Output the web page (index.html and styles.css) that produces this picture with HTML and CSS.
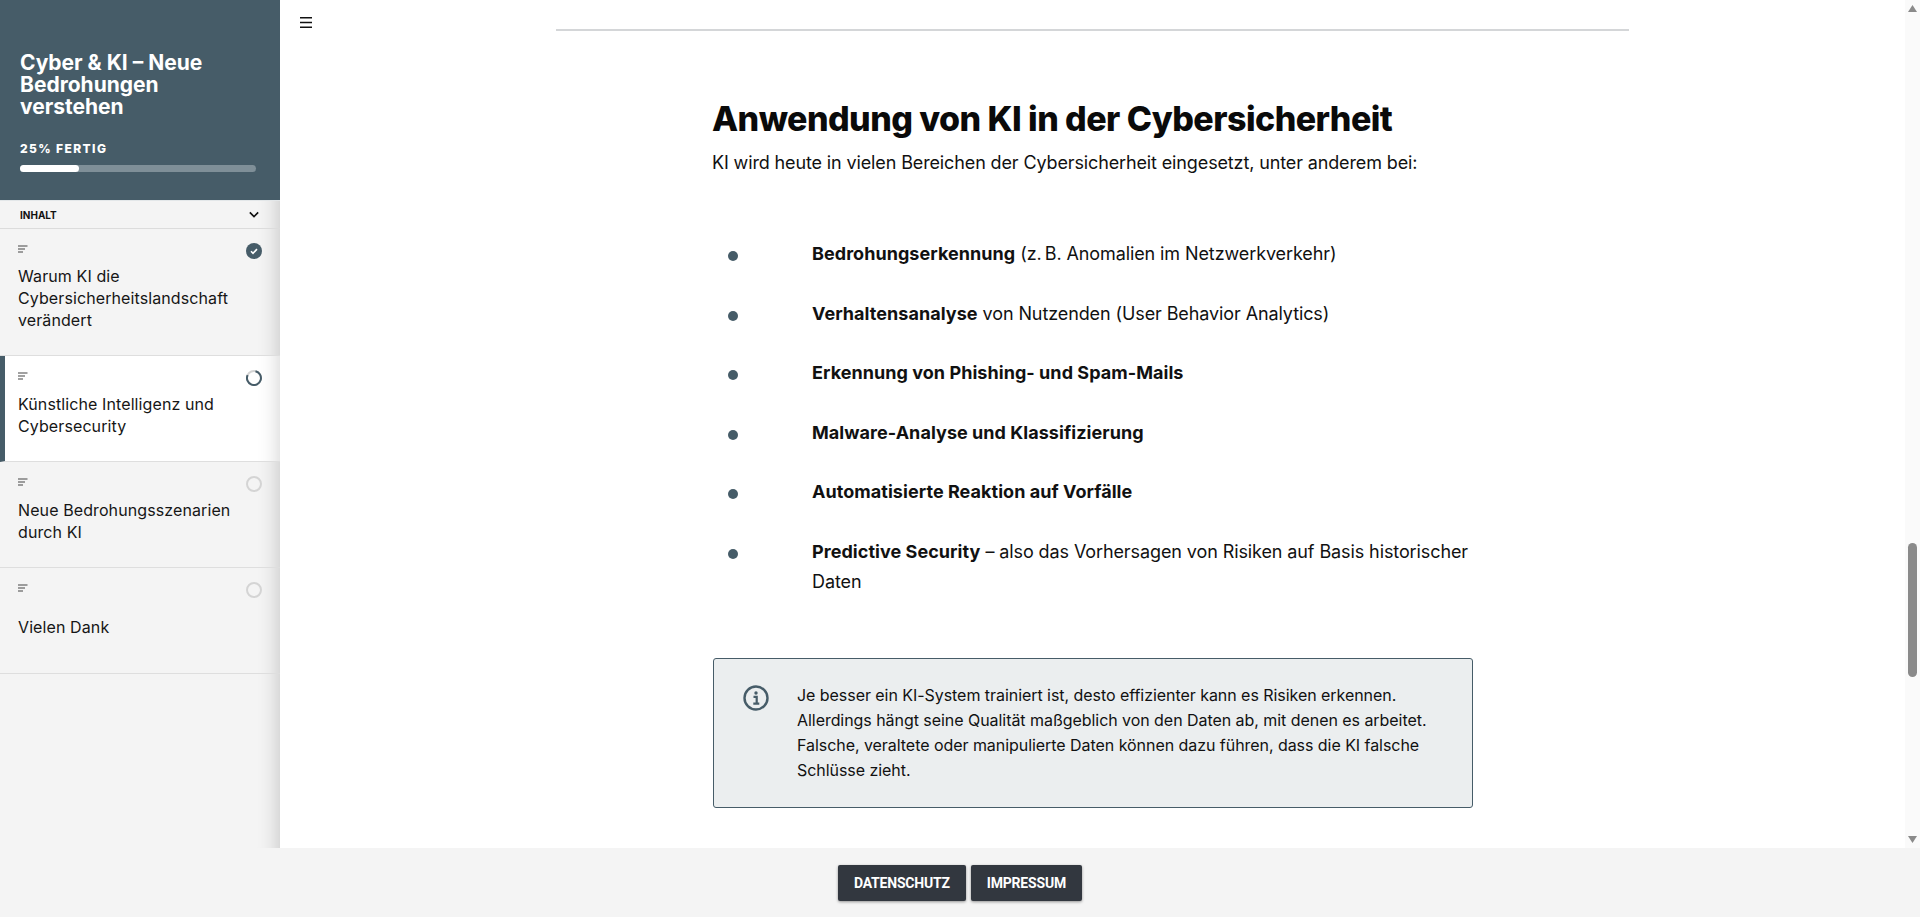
FILE: index.html
```html
<!DOCTYPE html>
<html lang="de">
<head>
  <meta charset="utf-8">
  <title>Cyber &amp; KI – Neue Bedrohungen verstehen</title>
  <link rel="stylesheet" href="styles.css">
</head>
<body>
  <div class="page">
    <div class="workspace">
      <aside class="sidebar">
        <header class="course-head">
          <h1 class="course-title">Cyber &amp; KI – Neue Bedrohungen verstehen</h1>
          <div class="progress-label">25% FERTIG</div>
          <div class="progress-track"><div class="progress-fill"></div></div>
        </header>
        <div class="toc-head">
          <span>INHALT</span>
          <svg class="chevron" viewBox="0 0 12 8" width="10" height="7"><path d="M1 1.500l5 5 5-5" fill="none" stroke="#111" stroke-width="2"/></svg>
        </div>
        <nav class="toc">
          <a class="lesson lesson-three">
            <div class="lesson-top">
              <svg class="lines" viewBox="0 0 10 8" width="10" height="8"><path d="M0 1h9.500M0 4h7M0 7h5" stroke="#444" stroke-width="1.200"/></svg>
              <svg class="status" viewBox="0 0 16 16" width="16" height="16"><circle cx="8" cy="8" r="8" fill="#465c68"/><path d="M5 8.300l2 2 4-4.200" fill="none" stroke="#fff" stroke-width="1.600"/></svg>
            </div>
            <div class="lesson-name">Warum KI die Cybersicherheitslandschaft verändert</div>
          </a>
          <a class="lesson lesson-active">
            <div class="lesson-top">
              <svg class="lines" viewBox="0 0 10 8" width="10" height="8"><path d="M0 1h9.500M0 4h7M0 7h5" stroke="#444" stroke-width="1.200"/></svg>
              <svg class="status" viewBox="0 0 16 16" width="16" height="16"><circle cx="8" cy="8" r="7" fill="none" stroke="#d4d4d4" stroke-width="2"/><path d="M9.500 1.200A7 7 0 1 1 1.600 5.100" fill="none" stroke="#465c68" stroke-width="2"/></svg>
            </div>
            <div class="lesson-name">Künstliche Intelligenz und Cybersecurity</div>
          </a>
          <a class="lesson">
            <div class="lesson-top">
              <svg class="lines" viewBox="0 0 10 8" width="10" height="8"><path d="M0 1h9.500M0 4h7M0 7h5" stroke="#444" stroke-width="1.200"/></svg>
              <svg class="status" viewBox="0 0 16 16" width="16" height="16"><circle cx="8" cy="8" r="7" fill="none" stroke="#d4d4d4" stroke-width="2"/></svg>
            </div>
            <div class="lesson-name">Neue Bedrohungsszenarien durch KI</div>
          </a>
          <a class="lesson lesson-last">
            <div class="lesson-top">
              <svg class="lines" viewBox="0 0 10 8" width="10" height="8"><path d="M0 1h9.500M0 4h7M0 7h5" stroke="#444" stroke-width="1.200"/></svg>
              <svg class="status" viewBox="0 0 16 16" width="16" height="16"><circle cx="8" cy="8" r="7" fill="none" stroke="#d4d4d4" stroke-width="2"/></svg>
            </div>
            <div class="lesson-name">Vielen Dank</div>
          </a>
        </nav>
      </aside>

      <main class="content">
        <button class="menu-toggle" type="button" aria-label="Menü">
          <svg viewBox="0 0 12 11" width="12" height="11"><path d="M0 .750h12M0 5.500h12M0 10.250h12" stroke="#111" stroke-width="1.500"/></svg>
        </button>
        <hr class="divider">
        <article class="block">
          <h2 class="block-title">Anwendung von KI in der Cybersicherheit</h2>
          <p class="block-intro">KI wird heute in vielen Bereichen der Cybersicherheit eingesetzt, unter anderem bei:</p>
          <ul class="points">
            <li><strong>Bedrohungserkennung</strong> (z.&#8201;B. Anomalien im Netzwerkverkehr)</li>
            <li><strong>Verhaltensanalyse</strong> von Nutzenden (User Behavior Analytics)</li>
            <li><strong>Erkennung von Phishing- und Spam-Mails</strong></li>
            <li><strong>Malware-Analyse und Klassifizierung</strong></li>
            <li><strong>Automatisierte Reaktion auf Vorfälle</strong></li>
            <li><strong>Predictive Security</strong> – also das Vorhersagen von Risiken auf Basis historischer Daten</li>
          </ul>
          <div class="note">
            <svg class="note-icon" viewBox="0 0 26 26" width="26" height="26">
              <circle cx="13" cy="13" r="11.500" fill="none" stroke="#465c68" stroke-width="2.400"/>
              <circle cx="13" cy="8" r="1.700" fill="#465c68"/>
              <path d="M10.500 11.800h3.200v6.400M10.300 18.600h6" fill="none" stroke="#465c68" stroke-width="2.200"/>
            </svg>
            <p class="note-text">Je besser ein KI-System trainiert ist, desto effizienter kann es Risiken erkennen. Allerdings hängt seine Qualität maßgeblich von den Daten ab, mit denen es arbeitet. Falsche, veraltete oder manipulierte Daten können dazu führen, dass die KI falsche Schlüsse zieht.</p>
          </div>
        </article>
      </main>

      <div class="scrollbar">
        <svg viewBox="0 0 9 7" width="9" height="7"><path d="M4.500 0L9 7H0z" fill="#8a8a8a"/></svg>
        <div class="scroll-thumb"></div>
        <svg viewBox="0 0 9 7" width="9" height="7"><path d="M4.500 7L0 0h9z" fill="#8a8a8a"/></svg>
      </div>
    </div>

    <footer class="legal">
      <a class="legal-btn">DATENSCHUTZ</a>
      <a class="legal-btn">IMPRESSUM</a>
    </footer>
  </div>
</body>
</html>
```

FILE: styles.css
```css
* {
  box-sizing: border-box;
}

html, body {
  margin: 0;
  height: 100%;
  overflow: hidden;
}

body {
  font-family: "Inter", "Liberation Sans", sans-serif;
  color: #111;
  background: #fff;
}

.page {
  display: flex;
  flex-direction: column;
  height: 917px;
}

.workspace {
  display: flex;
  flex: 1;
  min-height: 0;
}

/* left column */
.sidebar {
  width: 280px;
  flex: none;
  background: #f4f4f4;
  box-shadow: inset -26px 0 22px -26px rgba(0, 0, 0, 0.22);
}

.course-head {
  height: 200px;
  padding: 52px 24px 0 20px;
  background: #465c68;
  color: #fff;
}

.course-title {
  margin: 0;
  max-width: 200px;
  font-size: 21px;
  line-height: 22px;
  font-weight: 700;
}

.progress-label {
  margin-top: 23px;
  font-size: 12px;
  line-height: 16px;
  font-weight: 800;
  letter-spacing: 1.4px;
}

.progress-track {
  height: 7px;
  margin-top: 8px;
  border-radius: 4px;
  background: #7f8f98;
}

.progress-fill {
  width: 25%;
  height: 100%;
  border-radius: 4px;
  background: #fff;
}

.toc-head {
  display: flex;
  justify-content: space-between;
  align-items: center;
  height: 29px;
  padding: 0 21px 0 20px;
  border-top: 1px solid #e3e7e9;
  border-bottom: 1px solid #dcdcdc;
  font-size: 10px;
  font-weight: 700;
}

.lesson {
  display: block;
  height: 106px;
  padding: 13px 18px 0 18px;
  border-bottom: 1px solid #dedede;
}

.lesson-three {
  height: 127px;
}

.lesson-active {
  padding-left: 13px;
  border-left: 5px solid #465c68;
  background: #fff;
  box-shadow: inset -26px 0 22px -26px rgba(0, 0, 0, 0.2);
}

.lesson-top {
  display: flex;
  justify-content: space-between;
  align-items: flex-start;
  height: 18px;
}

.lines {
  margin-top: 3px;
}

.status {
  margin-top: 1px;
}

.lesson-name {
  margin-top: 6px;
  font-size: 16px;
  line-height: 22px;
  letter-spacing: 0.1px;
  color: #161616;
}

.lesson-three .lesson-name {
  margin-top: 5px;
}

.lesson-last .lesson-name {
  margin-top: 17px;
}

/* main column */
.content {
  position: relative;
  flex: 1;
  min-width: 0;
  overflow: hidden;
}

.menu-toggle {
  position: absolute;
  left: 20px;
  top: 17px;
  display: flex;
  padding: 0;
  border: 0;
  background: none;
}

.divider {
  width: 1073px;
  height: 2px;
  margin: 29px auto 0;
  border: 0;
  background: #d4d6d8;
}

.block {
  width: 761px;
  margin: 68px auto 0;
}

.block-title {
  margin: 0;
  font-size: 34px;
  line-height: 40px;
  font-weight: 800;
  letter-spacing: -0.55px;
  color: #0a0a0a;
}

.block-intro {
  margin: 10px 0 0;
  font-size: 18px;
  line-height: 27px;
  letter-spacing: -0.13px;
}

.points {
  margin: 63px 0 0;
  padding: 0;
  list-style: none;
}

.points li {
  position: relative;
  margin-bottom: 29.6px;
  padding-left: 100px;
  font-size: 18px;
  line-height: 30px;
  letter-spacing: -0.1px;
}

.points strong {
  letter-spacing: 0.05px;
}

.points li::before {
  content: "";
  position: absolute;
  left: 16px;
  top: 12px;
  width: 10px;
  height: 10px;
  border-radius: 50%;
  background: #465c68;
}

.note {
  display: flex;
  gap: 28px;
  align-items: flex-start;
  height: 150px;
  margin: 61px 0 0 1px;
  padding: 24px 30px 0 29px;
  border: 1px solid #465c68;
  border-radius: 3px;
  background: #ebeeef;
}

.note-icon {
  flex: none;
  margin-top: 2px;
}

.note-text {
  margin: 0;
  font-size: 16px;
  line-height: 25px;
  letter-spacing: -0.05px;
}

/* page scrollbar */
.scrollbar {
  display: flex;
  flex-direction: column;
  align-items: center;
  justify-content: space-between;
  width: 15px;
  flex: none;
  padding: 5px 0 5px;
  background: #fafafa;
}

.scroll-thumb {
  width: 9px;
  height: 134px;
  margin-top: 531px;
  margin-bottom: auto;
  border-radius: 5px;
  background: #8a8a8a;
}

/* bottom bar */
.legal {
  display: flex;
  justify-content: center;
  align-items: center;
  gap: 5px;
  height: 69px;
  background: #f4f4f4;
}

.legal-btn {
  display: block;
  padding: 0 16px;
  line-height: 36px;
  border-radius: 2px;
  background: #32373f;
  box-shadow: 0 1px 3px rgba(0, 0, 0, 0.4);
  color: #fff;
  font-family: "Roboto", "Liberation Sans", sans-serif;
  font-size: 14px;
  font-weight: 700;
  letter-spacing: -0.2px;
}
```
